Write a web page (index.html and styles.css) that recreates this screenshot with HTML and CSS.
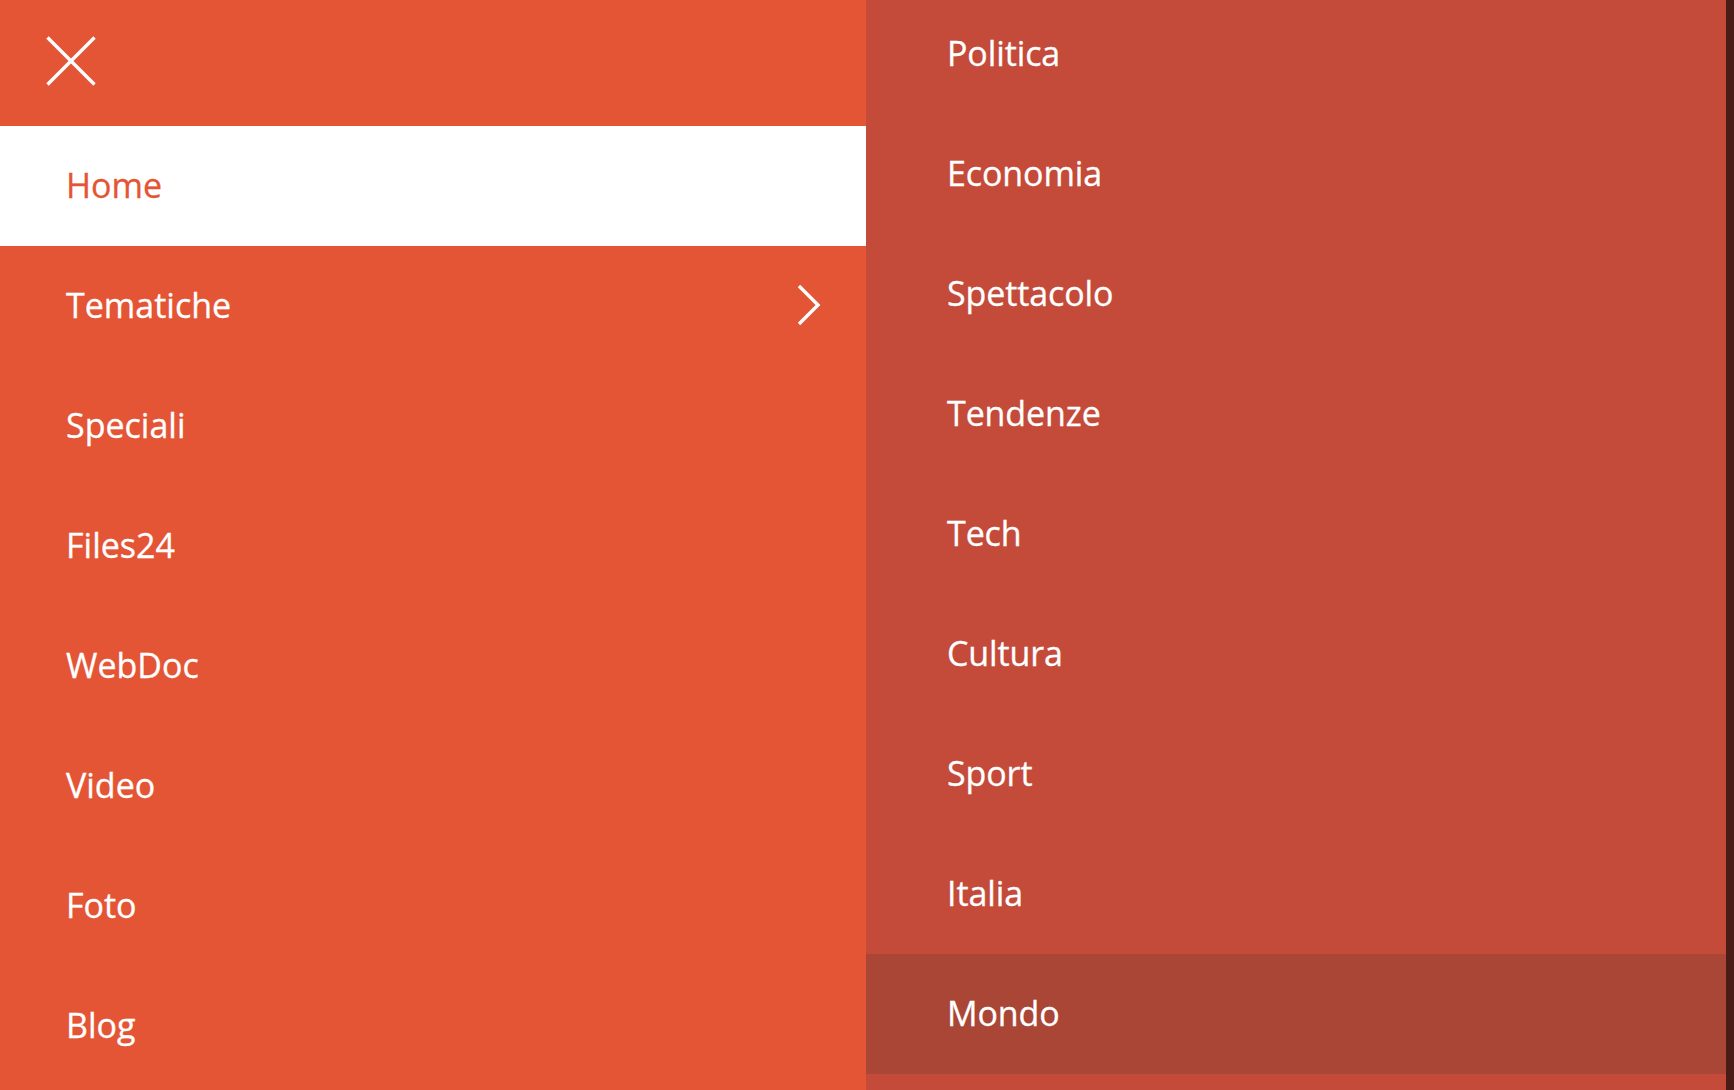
FILE: index.html
```html
<!DOCTYPE html>
<html lang="it">
<head>
<meta charset="utf-8">
<title>Menu</title>
<link rel="stylesheet" href="styles.css">
</head>
<body>
<div class="app">
  <nav class="main">
    <div class="header">
      <svg class="close" width="50" height="50" viewBox="0 0 50 50"><path d="M1.5 1.5 L48.5 48.5 M48.5 1.5 L1.5 48.5" stroke="#fff" stroke-width="3.4" fill="none"/></svg>
    </div>
    <ul class="list">
      <li class="item active">Home</li>
      <li class="item">Tematiche<svg class="chev" width="24" height="42" viewBox="0 0 24 42"><path d="M2 2 L21 21 L2 40" stroke="#fff" stroke-width="3.4" fill="none"/></svg></li>
      <li class="item">Speciali</li>
      <li class="item">Files24</li>
      <li class="item">WebDoc</li>
      <li class="item">Video</li>
      <li class="item">Foto</li>
      <li class="item">Blog</li>
    </ul>
  </nav>
  <nav class="sub">
    <ul class="sublist">
      <li class="subitem">Politica</li>
      <li class="subitem">Economia</li>
      <li class="subitem">Spettacolo</li>
      <li class="subitem">Tendenze</li>
      <li class="subitem">Tech</li>
      <li class="subitem">Cultura</li>
      <li class="subitem">Sport</li>
      <li class="subitem">Italia</li>
      <li class="subitem hover">Mondo</li>
    </ul>
  </nav>
  <div class="strip"></div>
</div>
</body>
</html>
```
FILE: styles.css
```css
* { box-sizing: border-box; }
html, body { margin: 0; padding: 0; }
body {
  font-family: "Open Sans", "Noto Sans", sans-serif;
  background: #4a1c17;
  overflow: hidden;
}
.app {
  display: flex;
  height: 1090px;
  overflow: hidden;
}
.main {
  width: 866px;
  flex: none;
  background: #e45535;
}
.header {
  height: 126px;
  display: flex;
  align-items: center;
  padding-left: 46px;
  padding-bottom: 4px;
}
.close { display: block; }
.list, .sublist {
  list-style: none;
  margin: 0;
  padding: 0;
}
.item {
  height: 120px;
  display: flex;
  align-items: center;
  justify-content: space-between;
  padding: 0 45px 2px 66px;
  color: #fff;
  font-size: 34px;
  font-weight: 400;
  -webkit-text-stroke: 0.3px currentColor;
}
.item.active {
  background: #fff;
  color: #e45535;
}
.chev { display: block; margin-top: 0; }
.sub {
  flex: 1;
  background: #c44b3a;
  overflow: hidden;
}
.sublist { margin-top: -6px; }
.subitem {
  height: 120px;
  display: flex;
  align-items: center;
  padding: 0 0 2px 81px;
  color: #fff;
  font-size: 34px;
  font-weight: 400;
  letter-spacing: -0.1px;
  -webkit-text-stroke: 0.3px currentColor;
}
.subitem.hover { background: #aa4636; }
.strip {
  width: 8px;
  flex: none;
  background: #4a1c17;
}
```
